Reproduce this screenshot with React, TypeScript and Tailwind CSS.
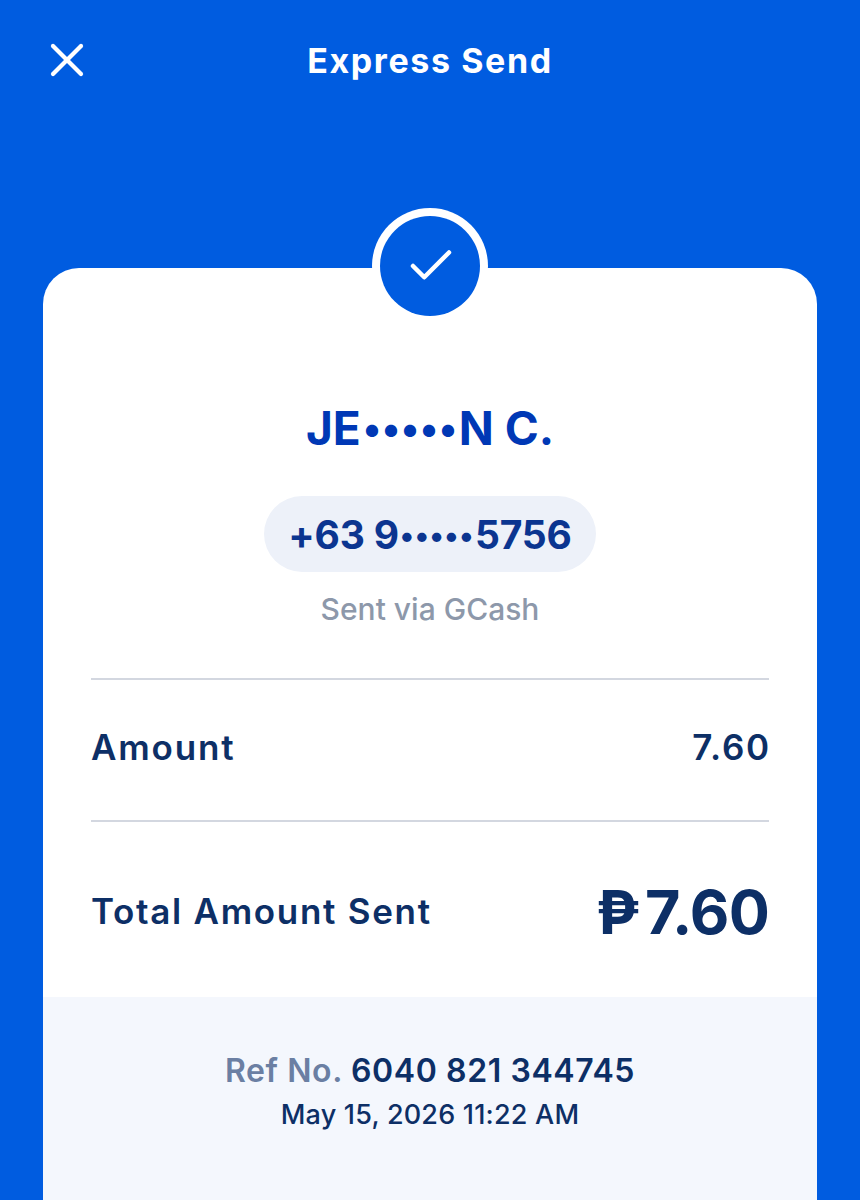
import { Check, X } from "lucide-react";

const font = "font-['Inter','Noto_Sans',sans-serif]";

export default function App() {
  return (
    <div className={`${font} flex h-[1200px] w-[860px] flex-col overflow-hidden bg-[#005ce0]`}>
      <header className="relative flex h-[120px] shrink-0 items-center justify-center">
        <X className="absolute left-[39px] top-[32px] h-[56px] w-[56px] text-white" strokeWidth={1.8} />
        <h1 className="text-[34px] font-bold tracking-[1.6px] text-white">Express Send</h1>
      </header>

      <main className="mx-[43px] mt-[148px] flex flex-1 flex-col rounded-t-[36px] bg-white">
        {/* check badge straddles the card's top edge */}
        <div className="relative">
          <div className="absolute left-1/2 top-[-60px] flex h-[116px] w-[116px] -translate-x-1/2 items-center justify-center rounded-full bg-white">
            <div className="flex h-[100px] w-[100px] items-center justify-center rounded-full bg-[#005ce0]">
              <Check className="ml-[2px] h-[54px] w-[54px] text-white" strokeWidth={2} />
            </div>
          </div>
        </div>

        <section className="flex flex-col items-center pt-[130px]">
          <div className="flex items-center text-[46px] font-bold leading-[60px] tracking-[0px] text-[#0038b5]">
            JE<span className="ml-[2px] mr-[1px] text-[39px] tracking-[0.5px]">•••••</span>N C.
          </div>
          <div className="mt-[38px] flex h-[76px] w-[332px] items-center justify-center rounded-full bg-[#edf1f9] pt-[3px] text-[39px] font-bold tracking-[-0.2px] text-[#0b3590]">
            +63 9<span className="mx-[1px] text-[30px] tracking-[0.6px]">•••••</span>5756
          </div>
          <div className="mt-[17px] text-[30px] font-medium leading-[40px] text-[#8d98aa]">Sent via GCash</div>
        </section>

        <section className="mx-[48px] mt-[49px]">
          <div className="flex h-[144px] items-center justify-between border-y-2 border-[#d3d7e0] pb-[6px] text-[35px] font-semibold tracking-[1.8px] text-[#0d2f66]">
            <span>Amount</span>
            <span className="mr-[-2px]">7.60</span>
          </div>
          <div className="flex h-[175px] items-center justify-between pt-[2px] text-[#0d2f66]">
            <span className="pt-[2px] text-[35px] font-semibold tracking-[1.7px]">Total Amount Sent</span>
            <span className="pt-[4px] text-[61px] font-bold tracking-[-0.8px]">
              <span className="mr-[6px]">₱</span>7.60
            </span>
          </div>
        </section>

        <footer className="flex flex-1 flex-col items-center bg-[#f4f7fd] pt-[53px]">
          <div className="text-[32px] font-semibold leading-[42px] tracking-[0.6px] text-[#0d2f66]">
            <span className="text-[#6b7fa3]">Ref No. </span>6040 821 344745
          </div>
          <div className="mt-[6px] text-[27px] font-medium leading-[34px] tracking-[0.2px] text-[#0d2f66]">May 15, 2026 11:22 AM</div>
        </footer>
      </main>
    </div>
  );
}
